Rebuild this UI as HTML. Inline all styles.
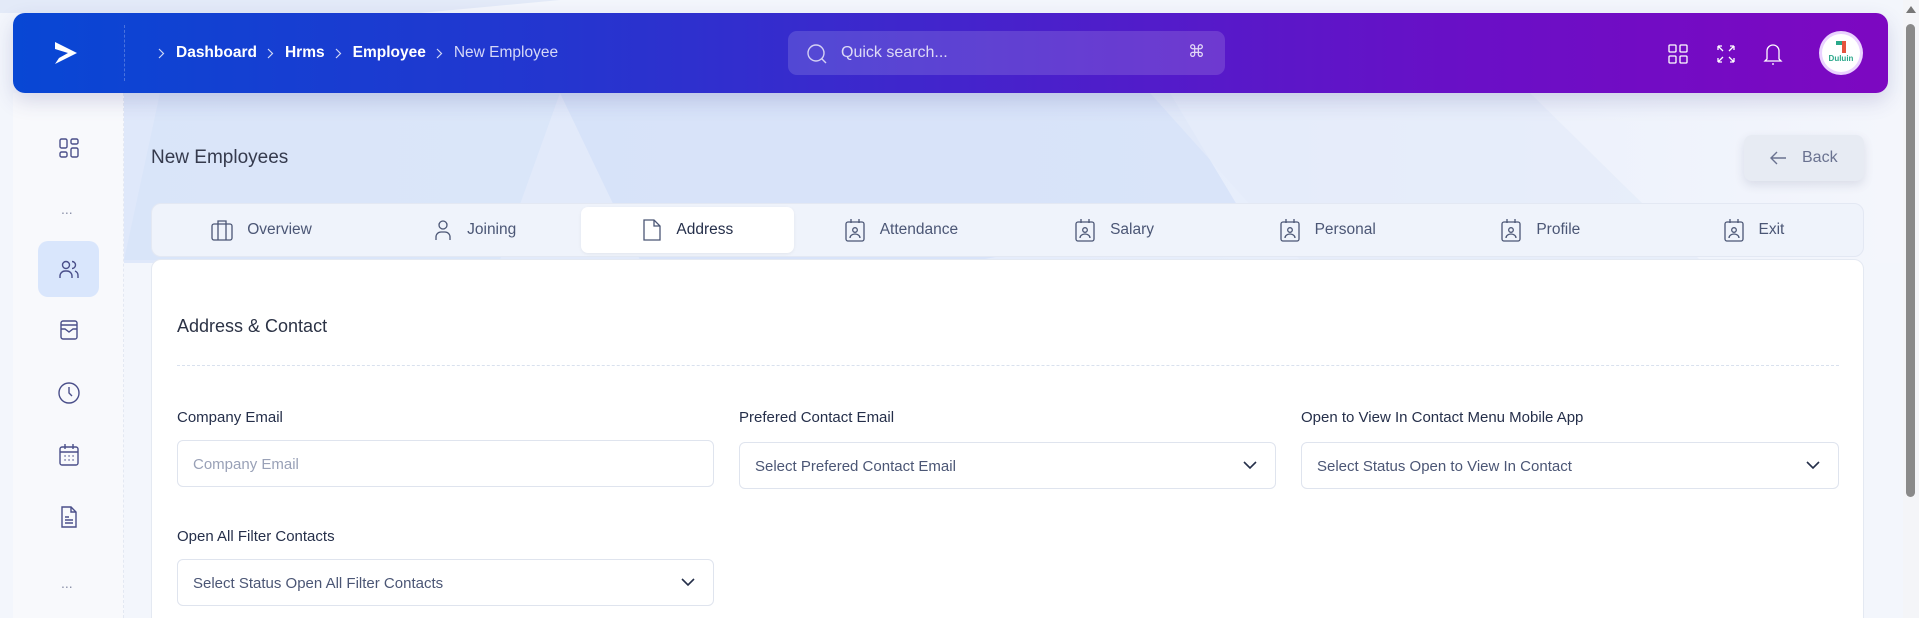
<!DOCTYPE html>
<html><head><meta charset="utf-8">
<style>
*{box-sizing:border-box;margin:0;padding:0}
html,body{width:1919px;height:618px;overflow:hidden}
body{font-family:"Liberation Sans",sans-serif;background:#f1f4fb;position:relative}
.bg{position:absolute;left:0;top:0}
.side{position:absolute;left:13px;top:93px;width:111px;height:525px;background:#f8f9fc;border-right:1px dashed #e3e8f2}
.hdr{position:absolute;left:13px;top:13px;width:1875px;height:80px;border-radius:12px;background:linear-gradient(90deg,#0847d4 0%,#2535cf 30%,#4a20cb 55%,#6a0fc6 78%,#7d08c1 100%);box-shadow:0 8px 20px rgba(60,60,140,.18)}
.vd{position:absolute;left:111px;top:12px;height:56px;border-left:1px dashed rgba(255,255,255,.25)}
.bc{position:absolute;left:145px;top:31px;color:#fff;font-size:15.5px;font-weight:700;display:flex;align-items:center;white-space:nowrap}
.bc svg{margin:0 11px 0 10px}
.srch{position:absolute;left:775px;top:18px;width:437px;height:44px;border-radius:9px;background:rgba(255,255,255,.14)}
.srch span{position:absolute;left:53px;top:13px;color:rgba(255,255,255,.8);font-size:16px}
.ti{position:absolute;color:#fff}
.av{position:absolute;left:1806px;top:18px;width:44px;height:44px;border-radius:50%;background:#fff;border:3px solid rgba(220,180,255,.6)}
h1{position:absolute;left:151px;top:147px;font-size:19px;font-weight:400;color:#353a4d}
.back{position:absolute;left:1744px;top:135px;width:120px;height:46px;border-radius:8px;background:#e7ebf3;box-shadow:0 4px 10px rgba(40,50,90,.12);color:#6a7290;font-size:16px}
.tabs{position:absolute;left:151px;top:203px;width:1713px;height:54px;border-radius:10px;background:#eff3fb;border:1px solid #e3e8f3;display:flex;padding:3px}
.tab{flex:1;display:flex;align-items:center;justify-content:center;gap:14px;font-size:15.5px;color:#4b5675;border-radius:7px}
.tab.a{background:#fff;color:#252f4a;box-shadow:0 1px 3px rgba(0,0,0,.06)}
.card{position:absolute;left:151px;top:259px;width:1713px;height:380px;background:#fff;border:1px solid #e4e9f2;border-radius:10px}
.ct{position:absolute;left:25px;top:56px;font-size:18px;color:#2b3245}
.dash{position:absolute;left:25px;top:105px;width:1662px;border-top:1px dashed #d9e1ee}
.lbl{position:absolute;font-size:15px;color:#252f4a}
.inp{position:absolute;height:47px;border:1px solid #dfe4ee;border-radius:6px;font-size:15px;color:#4b5675;padding:15px 15px}
.inp.ph{color:#99a1b7}
.inp svg{position:absolute;right:18px;top:18px}
</style></head><body>
<svg class="bg" width="1919" height="618">
<defs><linearGradient id="g" x1="0" y1="0" x2="1" y2="0"><stop offset="0" stop-color="#dfe8fa"/><stop offset=".6" stop-color="#e6edfb"/><stop offset="1" stop-color="#f4f6fc"/></linearGradient></defs>
<rect width="1919" height="618" fill="#f3f6fc"/>
<rect x="124" y="93" width="1780" height="170" fill="url(#g)"/>
<polygon points="160,93 560,93 500,260 124,260" fill="#d6e2f8" opacity=".6"/>
<polygon points="560,93 1170,93 1240,210 980,260 640,260" fill="#d3e0f8" opacity=".7"/>
<polygon points="1150,93 1530,93 1700,260 1300,260" fill="#e4ebfa" opacity=".7"/>
<polygon points="0,0 560,0 420,13 0,13" fill="#e3eaf8"/>
</svg>
<div class="side">
<svg style="position:absolute;left:45px;top:44px" width="22" height="22" viewBox="0 0 22 22" fill="none" stroke="#4a4f8a" stroke-width="1.4"><rect x="2" y="2" width="7" height="9" rx="1.5"/><rect x="13" y="2" width="7" height="5" rx="1.5"/><rect x="2" y="15" width="7" height="5" rx="1.5"/><rect x="13" y="11" width="7" height="9" rx="1.5"/></svg>
<div style="position:absolute;left:48px;top:108px;color:#8a90a8;font-size:14px">...</div>
<div style="position:absolute;left:25px;top:148px;width:61px;height:56px;border-radius:10px;background:#d9e6fc"></div>
<svg style="position:absolute;left:45px;top:165px" width="22" height="22" viewBox="0 0 22 22" fill="none" stroke="#4a4f8a" stroke-width="1.4"><circle cx="8" cy="7" r="3.5"/><path d="M2 20v-2a5 5 0 0 1 5-5h2a5 5 0 0 1 5 5v2"/><path d="M14 3.5a3.5 3.5 0 0 1 0 7M17 13a5 5 0 0 1 3 5v2"/></svg>
<svg style="position:absolute;left:45px;top:226px" width="22" height="22" viewBox="0 0 22 22" fill="none" stroke="#4a4f8a" stroke-width="1.4"><rect x="3" y="2" width="16" height="18" rx="2"/><path d="M3 6h16M3 10h4l4 3 4-3h4"/></svg>
<svg style="position:absolute;left:44px;top:288px" width="24" height="24" viewBox="0 0 24 24" fill="none" stroke="#4a4f8a" stroke-width="1.4"><circle cx="12" cy="12" r="10"/><path d="M12 6v6l3 3"/></svg>
<svg style="position:absolute;left:45px;top:350px" width="22" height="24" viewBox="0 0 22 24" fill="none" stroke="#4a4f8a" stroke-width="1.4"><rect x="2" y="4" width="18" height="18" rx="2"/><path d="M2 9h18M7 1v5M15 1v5"/><path d="M7 13h.1M11 13h.1M15 13h.1M7 17h.1M11 17h.1M15 17h.1" stroke-linecap="round"/></svg>
<svg style="position:absolute;left:46px;top:412px" width="20" height="24" viewBox="0 0 20 24" fill="none" stroke="#4a4f8a" stroke-width="1.4"><path d="M3 2h9l5 5v15H3z"/><path d="M12 2v5h5M6 12h4M6 15h8M6 18h8"/></svg>
<div style="position:absolute;left:48px;top:482px;color:#8a90a8;font-size:14px">...</div>
</div>
<div class="hdr">
<svg style="position:absolute;left:41px;top:28px" width="24" height="24" viewBox="0 0 24 24"><path d="M1 1 L23 12 L1 23 L5 17 L14 12 L1 8 Z" fill="#fff"/></svg>
<div class="vd"></div>
<div class="bc"><svg style="margin-left:0" width="7" height="11" viewBox="0 0 7 11" fill="none" stroke="rgba(255,255,255,.8)" stroke-width="1.2"><path d="M1 1l4.5 4.5L1 10"/></svg>Dashboard<svg width="7" height="11" viewBox="0 0 7 11" fill="none" stroke="rgba(255,255,255,.8)" stroke-width="1.2"><path d="M1 1l4.5 4.5L1 10"/></svg>Hrms<svg width="7" height="11" viewBox="0 0 7 11" fill="none" stroke="rgba(255,255,255,.8)" stroke-width="1.2"><path d="M1 1l4.5 4.5L1 10"/></svg>Employee<svg width="7" height="11" viewBox="0 0 7 11" fill="none" stroke="rgba(255,255,255,.8)" stroke-width="1.2"><path d="M1 1l4.5 4.5L1 10"/></svg><span style="color:#d6d8f8;font-weight:400">New Employee</span></div>
<div class="srch">
<svg style="position:absolute;left:18px;top:12px" width="22" height="22" viewBox="0 0 22 22" fill="none" stroke="rgba(255,255,255,.75)" stroke-width="1.4"><circle cx="10" cy="10" r="8"/><path d="M16 16l4 4"/></svg>
<span>Quick search...</span>
<span style="left:400px;top:11px;font-size:17px">⌘</span></div>
<svg class="ti" style="left:1655px;top:31px" width="20" height="20" viewBox="0 0 20 20" fill="none" stroke="#fff" stroke-width="1.3"><rect x="1" y="1" width="7" height="7" rx="1"/><rect x="12" y="1" width="7" height="7" rx="1"/><rect x="1" y="12" width="7" height="7" rx="1"/><rect x="12" y="12" width="7" height="7" rx="1"/></svg>
<svg class="ti" style="left:1703px;top:31px" width="20" height="20" viewBox="0 0 20 20" fill="none" stroke="#fff" stroke-width="1.3"><path d="M2 2l5 5M2 2v4M2 2h4M18 2l-5 5M18 2v4M18 2h-4M2 18l5-5M2 18v-4M2 18h4M18 18l-5-5M18 18v-4M18 18h-4"/></svg>
<svg class="ti" style="left:1750px;top:29px" width="20" height="24" viewBox="0 0 20 24" fill="none" stroke="#fff" stroke-width="1.3"><path d="M4 17V9a6 6 0 0 1 12 0v8l2 2H2z"/><path d="M9 22h2"/></svg>
<div class="av"><svg width="38" height="38" viewBox="0 0 38 38" style="position:absolute;left:0;top:0"><rect x="14" y="7" width="10" height="4" fill="#2aa88a"/><rect x="20" y="7" width="4" height="12" fill="#e5533d"/><text x="19" y="27" font-size="8" font-family="Liberation Sans" font-weight="700" fill="#2aa88a" text-anchor="middle">Duluin</text></svg></div>
</div>
<h1>New Employees</h1>
<div class="back"><svg style="position:absolute;left:25px;top:15px" width="18" height="16" viewBox="0 0 18 16" fill="none" stroke="#6a7290" stroke-width="1.4"><path d="M17 8H2M8 2L2 8l6 6"/></svg><span style="position:absolute;left:58px;top:14px">Back</span></div>
<div class="tabs">
<div class="tab"><svg width="22" height="22" viewBox="0 0 22 22" fill="none" stroke="#4b5675" stroke-width="1.3"><rect x="1" y="5" width="20" height="16" rx="2"/><path d="M7 5V2h8v3M7 5v16M15 5v16"/></svg>Overview</div>
<div class="tab"><svg width="20" height="22" viewBox="0 0 20 22" fill="none" stroke="#4b5675" stroke-width="1.3"><circle cx="10" cy="6" r="4"/><path d="M3 21v-3a5 5 0 0 1 5-5h4a5 5 0 0 1 5 5v3"/></svg>Joining</div>
<div class="tab a"><svg width="20" height="24" viewBox="0 0 20 24" fill="none" stroke="#4b5675" stroke-width="1.3"><path d="M2 2h10l6 6v14H2z"/><path d="M12 2v6h6"/></svg>Address</div>
<div class="tab"><svg width="22" height="24" viewBox="0 0 22 24" fill="none" stroke="#4b5675" stroke-width="1.3"><rect x="2" y="4" width="18" height="19" rx="2"/><path d="M7 1v4M15 1v4"/><circle cx="11" cy="12" r="2.3"/><path d="M6 20a5 4 0 0 1 10 0"/></svg>Attendance</div>
<div class="tab"><svg width="22" height="24" viewBox="0 0 22 24" fill="none" stroke="#4b5675" stroke-width="1.3"><rect x="2" y="4" width="18" height="19" rx="2"/><path d="M7 1v4M15 1v4"/><circle cx="11" cy="12" r="2.3"/><path d="M6 20a5 4 0 0 1 10 0"/></svg>Salary</div>
<div class="tab"><svg width="22" height="24" viewBox="0 0 22 24" fill="none" stroke="#4b5675" stroke-width="1.3"><rect x="2" y="4" width="18" height="19" rx="2"/><path d="M7 1v4M15 1v4"/><circle cx="11" cy="12" r="2.3"/><path d="M6 20a5 4 0 0 1 10 0"/></svg>Personal</div>
<div class="tab"><svg width="22" height="24" viewBox="0 0 22 24" fill="none" stroke="#4b5675" stroke-width="1.3"><rect x="2" y="4" width="18" height="19" rx="2"/><path d="M7 1v4M15 1v4"/><circle cx="11" cy="12" r="2.3"/><path d="M6 20a5 4 0 0 1 10 0"/></svg>Profile</div>
<div class="tab"><svg width="22" height="24" viewBox="0 0 22 24" fill="none" stroke="#4b5675" stroke-width="1.3"><rect x="2" y="4" width="18" height="19" rx="2"/><path d="M7 1v4M15 1v4"/><circle cx="11" cy="12" r="2.3"/><path d="M6 20a5 4 0 0 1 10 0"/></svg>Exit</div>
</div>
<div class="card">
<div class="ct">Address &amp; Contact</div>
<div class="dash"></div>
<div class="lbl" style="left:25px;top:149px">Company Email</div>
<div class="lbl" style="left:587px;top:149px">Prefered Contact Email</div>
<div class="lbl" style="left:1149px;top:149px">Open to View In Contact Menu Mobile App</div>
<div class="inp ph" style="left:25px;top:180px;width:537px">Company Email</div>
<div class="inp" style="left:587px;top:182px;width:537px">Select Prefered Contact Email<svg width="14" height="9" viewBox="0 0 14 9" fill="none" stroke="#252f4a" stroke-width="1.6"><path d="M1 1l6 6 6-6"/></svg></div>
<div class="inp" style="left:1149px;top:182px;width:538px">Select Status Open to View In Contact<svg width="14" height="9" viewBox="0 0 14 9" fill="none" stroke="#252f4a" stroke-width="1.6"><path d="M1 1l6 6 6-6"/></svg></div>
<div class="lbl" style="left:25px;top:268px">Open All Filter Contacts</div>
<div class="inp" style="left:25px;top:299px;width:537px">Select Status Open All Filter Contacts<svg width="14" height="9" viewBox="0 0 14 9" fill="none" stroke="#252f4a" stroke-width="1.6"><path d="M1 1l6 6 6-6"/></svg></div>
</div>
<div style="position:absolute;left:1903px;top:0;width:16px;height:618px;background:#f4f5f8"></div>
<div style="position:absolute;left:1906px;top:24px;width:9px;height:473px;border-radius:5px;background:#8a8a8a"></div>
<div style="position:absolute;left:1906px;top:6px;width:0;height:0;border-left:5px solid transparent;border-right:5px solid transparent;border-bottom:7px solid #777"></div>
</body></html>
